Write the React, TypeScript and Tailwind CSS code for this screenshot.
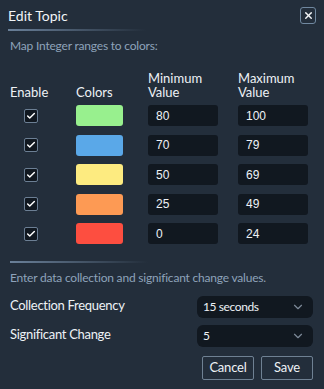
import React from 'react';
import { ChevronDown, X, Check } from 'lucide-react';

// ── Data ─────────────────────────────────────────────────

const RANGES = [
  { id: 'r1', color: 'bg-[#98f08e]', min: '80', max: '100' },
  { id: 'r2', color: 'bg-[#5aa8e8]', min: '70', max: '79' },
  { id: 'r3', color: 'bg-[#fdeb80]', min: '50', max: '69' },
  { id: 'r4', color: 'bg-[#fd9a54]', min: '25', max: '49' },
  { id: 'r5', color: 'bg-[#fd4e40]', min: '0', max: '24' },
];

const font = { fontFamily: 'Lato, "Noto Sans", sans-serif' };
const numFont = { fontFamily: '"Liberation Sans", Arial, sans-serif' };

const Divider: React.FC = () => (
  <div className="h-[2px] w-[138px] bg-gradient-to-r from-[#6a8099] to-transparent" />
);

const SelectBox: React.FC<{ value: string }> = ({ value }) => (
  <div className="w-[116px] h-[22px] rounded-md bg-[#111820] flex items-center justify-between pl-[6px] pr-[8px]">
    <span className="text-[12px] tracking-[-0.4px] text-[#eef2f6]">{value}</span>
    <ChevronDown className="w-[14px] h-[14px] text-[#7d8998]" strokeWidth={2} />
  </div>
);

const HeaderCell: React.FC<{ lines: string[] }> = ({ lines }) => (
  <div className="self-end flex flex-col">
    {lines.map((l) => (
      <span key={l} className="text-[13px] leading-[14px] text-[#eef2f6]">{l}</span>
    ))}
  </div>
);

export default function App() {
  return (
    <div style={font} className="w-[324px] h-[389px] bg-[#232e3b] px-[8px] flex flex-col">
      {/* ── Title ───────────────────────────── */}
      <div className="flex items-center justify-between h-[29px] pt-[1px]">
        <span className="text-[14px] text-[#f2f5f8]">Edit Topic</span>
        <div className="w-[16px] h-[17px] border border-[#7088a0] rounded-[3px] flex items-center justify-center">
          <X className="w-[11px] h-[11px] text-[#f4f6f8]" strokeWidth={3} />
        </div>
      </div>
      <Divider />

      <p className="mt-[7px] ml-[2px] text-[12px] tracking-[-0.2px] text-[#8ea3ba] leading-[16px]">Map Integer ranges to colors:</p>

      {/* ── Range table ─────────────────────── */}
      <div className="mt-[17px] ml-[2px] grid grid-cols-[66px_72px_90px_70px]">
        <HeaderCell lines={['Enable']} />
        <HeaderCell lines={['Colors']} />
        <HeaderCell lines={['Minimum', 'Value']} />
        <HeaderCell lines={['Maximum', 'Value']} />
      </div>

      <div className="mt-[6px] ml-[2px] grid grid-cols-[66px_72px_90px_70px] gap-y-[8.5px] items-center">
        {RANGES.map((r) => (
          <React.Fragment key={r.id}>
            <div className="pl-[14px] h-[21px] flex items-center">
              <div className="w-[14px] h-[14px] rounded-[2px] border border-[#6c7f94] bg-[#111820] flex items-center justify-center">
                <Check className="w-[10px] h-[10px] text-white" strokeWidth={3.5} />
              </div>
            </div>
            <div className={`w-[47px] h-[21px] rounded-[3px] ${r.color}`} />
            <div style={numFont} className="w-[70px] h-[21px] rounded-[3px] bg-[#111820] pl-[8px] flex items-center text-[12px] text-[#eef2f6]">{r.min}</div>
            <div style={numFont} className="w-[70px] h-[21px] rounded-[3px] bg-[#111820] pl-[8px] flex items-center text-[12px] text-[#eef2f6]">{r.max}</div>
          </React.Fragment>
        ))}
      </div>

      <div className="mt-[17px] ml-[2px]">
        <Divider />
      </div>
      <p className="mt-[7px] ml-[2px] text-[12px] tracking-[-0.2px] text-[#8ea3ba] leading-[16px]">Enter data collection and significant change values.</p>

      {/* ── Collection settings ─────────────── */}
      <div className="mt-[10px] ml-[2px] flex flex-col gap-[7px]">
        <div className="flex justify-between items-start">
          <span className="text-[13px] tracking-[-0.3px] leading-[16px] text-[#eef2f6] mt-[1px]">Collection Frequency</span>
          <div className="mr-[3px]"><SelectBox value="15 seconds" /></div>
        </div>
        <div className="flex justify-between items-start">
          <span className="text-[13px] tracking-[-0.3px] leading-[16px] text-[#eef2f6] mt-[1px]">Significant Change</span>
          <div className="mr-[3px]"><SelectBox value="5" /></div>
        </div>
      </div>

      <div className="mt-[9px] mr-[3px] flex justify-end gap-[7px]">
        <button className="w-[52px] h-[24px] border border-[#6f8193] rounded-[2px] text-[13px] tracking-[-0.2px] text-[#eef2f6]">Cancel</button>
        <button className="w-[52px] h-[24px] border border-[#6f8193] rounded-[2px] text-[13px] tracking-[-0.2px] text-[#eef2f6]">Save</button>
      </div>
    </div>
  );
}
